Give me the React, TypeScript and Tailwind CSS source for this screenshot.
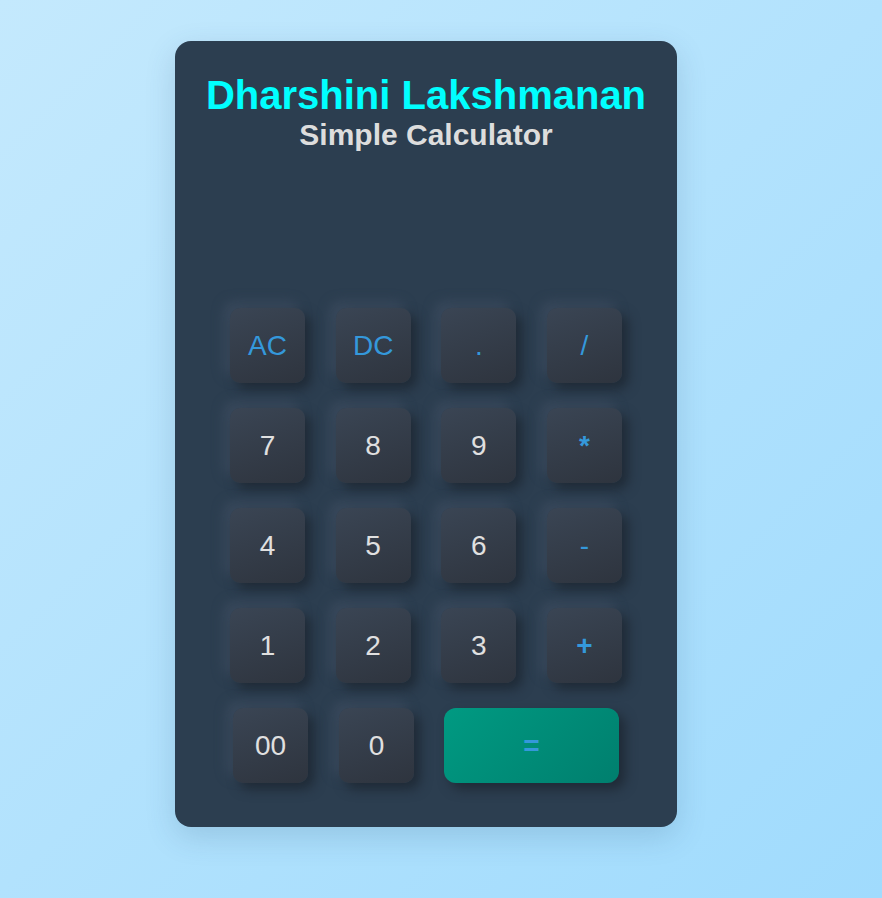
const ROWS: string[][] = [
  ['AC', 'DC', '.', '/'],
  ['7', '8', '9', '*'],
  ['4', '5', '6', '-'],
  ['1', '2', '3', '+'],
];

const OPS = ['AC', 'DC', '.', '/', '*', '-', '+'];

const keyBase =
  'flex h-[75px] w-[75px] items-center justify-center rounded-[10px] bg-[linear-gradient(160deg,#3a4554,#2e343e)] text-[28px] shadow-[6px_6px_12px_#1f2a36,-6px_-6px_12px_#3a4a5d]';

function Key({ label }: { label: string }) {
  const isOp = OPS.includes(label);
  return (
    <button className={`${keyBase} ${isOp ? 'text-[#3498db]' : 'text-[#e0e0e0]'} ${label === '+' || label === '*' ? 'font-bold' : ''}`}>
      {label}
    </button>
  );
}

export default function App() {
  return (
    <div className="min-h-[898px] w-full bg-[linear-gradient(135deg,#c4e9fd,#a0dbfd)] pt-[41px] pl-[175px] font-['Liberation_Sans',Arial,sans-serif]">
      <div className="flex h-[786px] w-[502px] flex-col rounded-[16px] bg-[#2c3e50] pt-[31px] shadow-[0_10px_30px_rgba(40,80,110,0.18)]">
        {/* Header */}
        <h1 className="text-center text-[40px] font-bold leading-[46px] text-[#00ffff]">Dharshini Lakshmanan</h1>
        <h2 className="text-center text-[30px] font-bold leading-[34px] text-[#dddddd]">Simple Calculator</h2>

        {/* Display (empty) */}
        <div className="h-[156px]" />

        {/* Keypad */}
        <div className="flex flex-col gap-[25px] px-[55px]">
          {ROWS.map((row, i) => (
            <div key={i} className="flex justify-between">
              {row.map((k) => (
                <Key key={k} label={k} />
              ))}
            </div>
          ))}
          <div className="flex pl-[3px]">
            <Key label="00" />
            <div className="ml-[31px]">
              <Key label="0" />
            </div>
            <button className="ml-[30px] flex h-[75px] w-[175px] items-center justify-center rounded-[12px] bg-[linear-gradient(135deg,#009a82,#007f6e)] text-[28px] font-bold text-[#3498db] shadow-[6px_6px_12px_#1f2a36]">
              =
            </button>
          </div>
        </div>
      </div>
    </div>
  );
}
